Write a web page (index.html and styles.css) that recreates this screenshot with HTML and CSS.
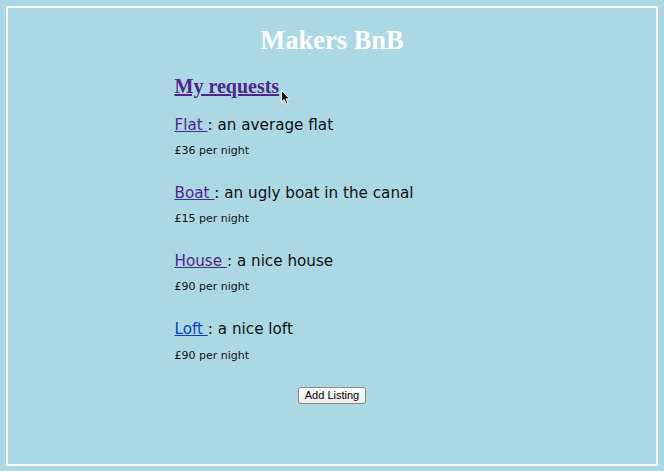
FILE: index.html
```html
<!DOCTYPE html>
<html>
<head>
<meta charset="utf-8">
<title>Makers BnB</title>
<link rel="stylesheet" href="styles.css">
</head>
<body>
<h1 class="site-title">Makers BnB</h1>
<main class="content">
  <h2 class="section-title"><a class="visited" href="#">My requests</a><svg class="cursor" width="10" height="16" viewBox="0 0 10 16"><path d="M0.5 0.5 L0.5 12 L3.2 9.6 L5.2 14.2 L7 13.4 L5 8.9 L8.6 8.9 Z" fill="#111" stroke="#fff" stroke-width="1"/></svg></h2>
  <div class="listing">
    <p class="listing-title"><a class="visited" href="#">Flat </a>: an average flat</p>
    <p class="listing-price">£36 per night</p>
  </div>
  <div class="listing">
    <p class="listing-title"><a class="visited" href="#">Boat </a>: an ugly boat in the canal</p>
    <p class="listing-price">£15 per night</p>
  </div>
  <div class="listing">
    <p class="listing-title"><a class="visited" href="#">House </a>: a nice house</p>
    <p class="listing-price">£90 per night</p>
  </div>
  <div class="listing">
    <p class="listing-title"><a class="fresh" href="#">Loft </a>: a nice loft</p>
    <p class="listing-price">£90 per night</p>
  </div>
</main>
<div class="actions">
  <button class="add-button" type="button">Add Listing</button>
</div>
</body>
</html>
```

FILE: styles.css
```css
html {
  background: #acd8e3;
}

body {
  margin: 6px;
  border: 2px solid #ffffff;
  height: 456px;
  font-family: "DejaVu Sans", Verdana, sans-serif;
  color: #111111;
}

.site-title {
  margin: 17px 0 0;
  font-family: "Liberation Serif", "Times New Roman", serif;
  font-size: 26.5px;
  line-height: 30px;
  font-weight: bold;
  color: #ffffff;
  text-align: center;
}

.content {
  width: 315px;
  margin: 0 auto;
}

.section-title {
  position: relative;
  margin: 19px 0 0;
  font-family: "Liberation Serif", "Times New Roman", serif;
  font-size: 20px;
  line-height: 24px;
  font-weight: bold;
}

.cursor {
  position: absolute;
  left: 106px;
  top: 16px;
}

.visited {
  color: #4e2589;
}

.fresh {
  color: #0b40c6;
}

.listing {
  margin-top: 17.5px;
}

.listing + .listing {
  margin-top: 26.6px;
}

.listing-title {
  margin: 0;
  font-size: 15.2px;
  line-height: 18px;
}

.listing-price {
  margin: 10.6px 0 0;
  font-size: 11px;
  line-height: 13px;
}

.actions {
  margin-top: 22.8px;
  text-align: center;
}

.add-button {
  height: 17px;
  padding: 0 6px;
  border: 1px solid #8a8a8a;
  border-radius: 3px;
  background: linear-gradient(#ffffff, #ececec);
  font-family: "Liberation Sans", Arial, sans-serif;
  font-size: 11px;
  line-height: 15px;
  color: #000000;
}
```
